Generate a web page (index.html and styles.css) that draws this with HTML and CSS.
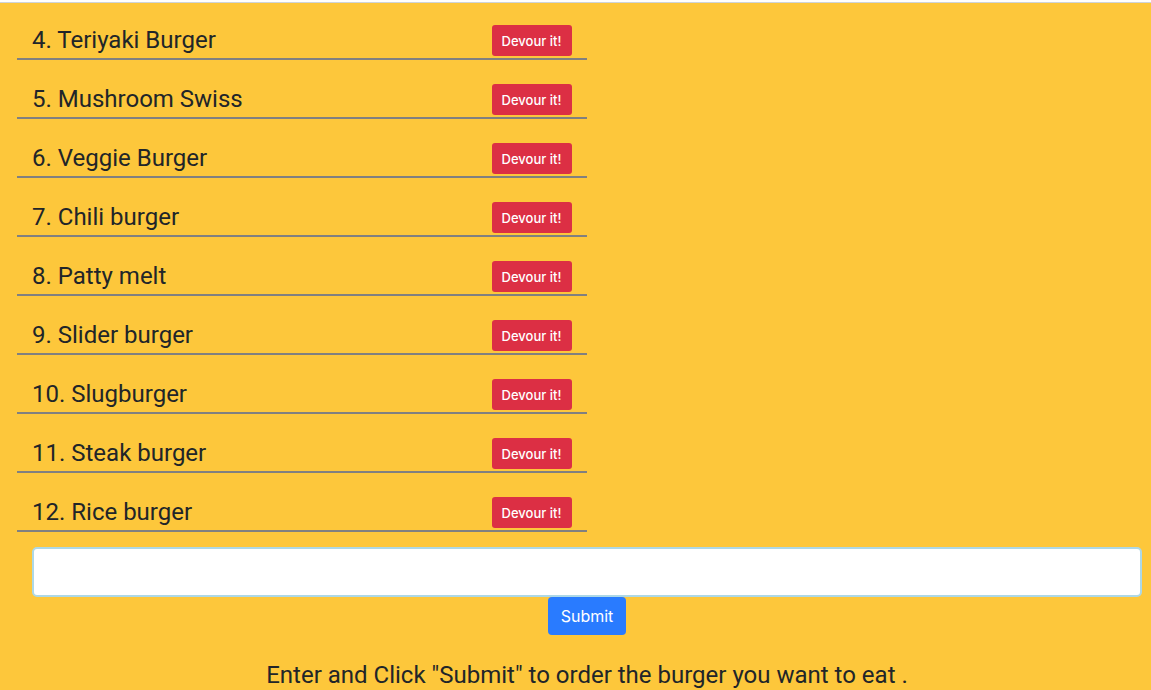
FILE: index.html
```html
<!DOCTYPE html>
<html lang="en">
<head>
  <meta charset="utf-8">
  <title>Burgers</title>
  <link rel="stylesheet" href="styles.css">
</head>
<body>
  <main class="menu">
    <ol class="burgers" start="4">
      <li class="burger"><span>4. Teriyaki Burger</span><button class="btn btn-devour" type="button">Devour it!</button></li>
      <li class="burger"><span>5. Mushroom Swiss</span><button class="btn btn-devour" type="button">Devour it!</button></li>
      <li class="burger"><span>6. Veggie Burger</span><button class="btn btn-devour" type="button">Devour it!</button></li>
      <li class="burger"><span>7. Chili burger</span><button class="btn btn-devour" type="button">Devour it!</button></li>
      <li class="burger"><span>8. Patty melt</span><button class="btn btn-devour" type="button">Devour it!</button></li>
      <li class="burger"><span>9. Slider burger</span><button class="btn btn-devour" type="button">Devour it!</button></li>
      <li class="burger"><span>10. Slugburger</span><button class="btn btn-devour" type="button">Devour it!</button></li>
      <li class="burger"><span>11. Steak burger</span><button class="btn btn-devour" type="button">Devour it!</button></li>
      <li class="burger"><span>12. Rice burger</span><button class="btn btn-devour" type="button">Devour it!</button></li>
    </ol>
    <form class="order">
      <input class="order-input" id="burger-name" type="text">
      <button class="btn btn-submit" type="submit">Submit</button>
      <label class="order-hint" for="burger-name">Enter and Click "Submit" to order the burger you want to eat .</label>
    </form>
  </main>
</body>
</html>
```
FILE: styles.css
```css
* {
  box-sizing: border-box;
}

html {
  overflow: hidden;
}

body {
  margin: 0;
  padding-top: 2px;
  background: #fff;
  color: #212529;
  font-family: Roboto, "Liberation Sans", sans-serif;
  font-size: 24px;
}

.menu {
  min-height: 100vh;
  padding-top: 22px;
  border-top: 1px solid #ced4da;
  background: #fdc73b;
}

.burgers {
  display: flex;
  flex-direction: column;
  gap: 24px;
  width: calc(50% - 6px);
  margin: 0 0 15px 17px;
  padding: 0;
  list-style: none;
}

.burger {
  display: flex;
  justify-content: space-between;
  align-items: center;
  padding: 0 15px 2px;
  border-bottom: 2px solid #808080;
  line-height: 31px;
}

.btn {
  border: 0;
  border-radius: 4px;
  color: #fff;
  font-family: Inter, "Liberation Sans", sans-serif;
  cursor: pointer;
}

.btn-devour {
  width: 80px;
  height: 31px;
  padding: 0;
  border-radius: 3px;
  background: #dc2f44;
  font-size: 13px;
  font-weight: 500;
}

.order {
  display: flex;
  flex-direction: column;
  align-items: center;
  padding: 0 9px 0 32px;
}

.order-input {
  width: 100%;
  height: 50px;
  padding: 6px 12px;
  border: 2px solid #add8e6;
  border-radius: 5px;
  background: #fff;
  font: inherit;
}

.btn-submit {
  height: 38px;
  padding: 0 13px;
  background: #297bff;
  font-size: 16px;
}

.order-hint {
  margin-top: 22px;
  line-height: 36px;
}
```
